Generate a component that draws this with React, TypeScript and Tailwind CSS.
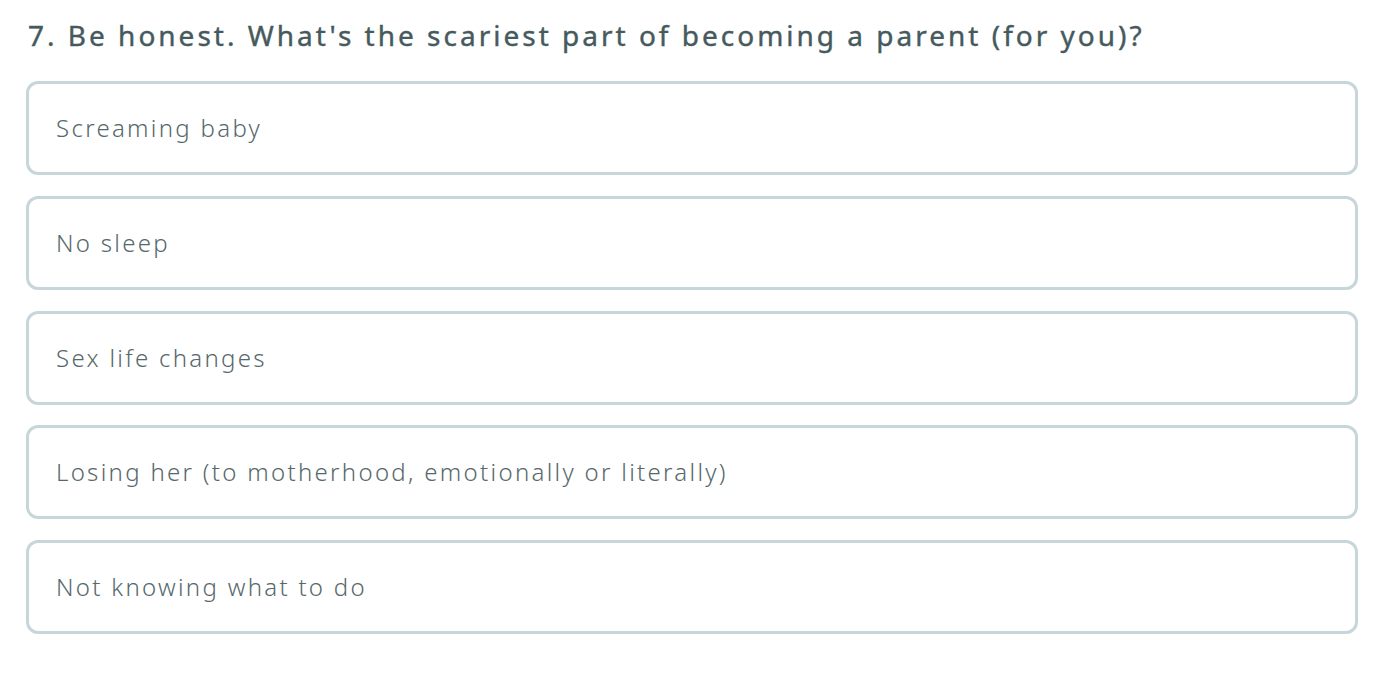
const options = [
  "Screaming baby",
  "No sleep",
  "Sex life changes",
  "Losing her (to motherhood, emotionally or literally)",
  "Not knowing what to do",
];

export default function App() {
  return (
    <div
      className="min-h-[680px] bg-white px-[26px] pt-[14px]"
      style={{ fontFamily: '"Noto Sans", "DejaVu Sans", sans-serif' }}
    >
      <h2 className="pl-[2px] text-[28px] font-normal leading-[42px] tracking-[3px] text-[#465a5e] [-webkit-text-stroke:0.4px_#465a5e]">
        7. Be honest. What's the scariest part of becoming a parent (for you)?
      </h2>
      <div className="mt-[25px] flex w-[1332px] flex-col gap-[20.75px]">
        {options.map((option) => (
          <button
            key={option}
            className="flex h-[94px] items-center rounded-[12px] border-[3px] border-[#c6d6db] bg-white px-[27px] text-left text-[24px] font-light tracking-[2.3px] text-[#56686b]"
          >
            {option}
          </button>
        ))}
      </div>
    </div>
  );
}
